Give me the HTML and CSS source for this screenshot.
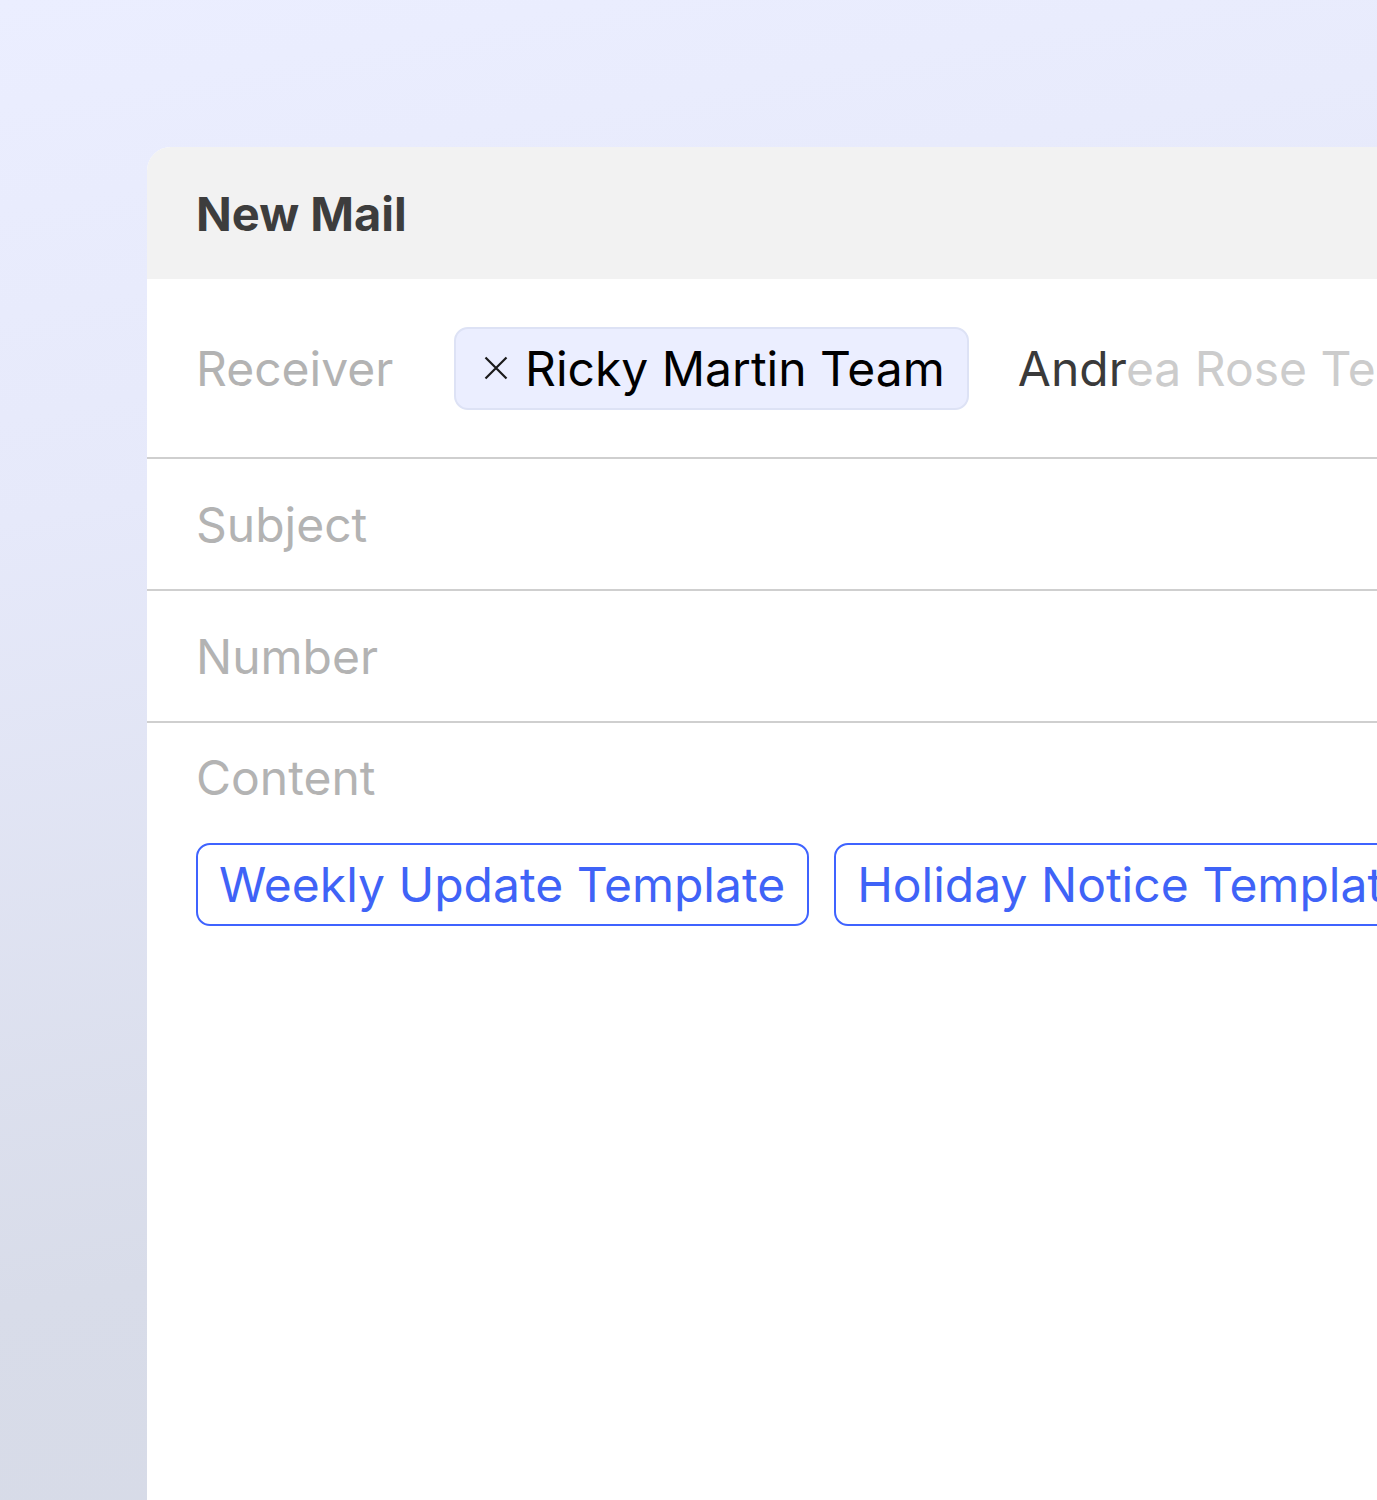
FILE: index.html
```html
<!DOCTYPE html>
<html>
<head>
<meta charset="utf-8">
<link rel="stylesheet" href="styles.css">
</head>
<body>
<div class="stage">
  <div class="card">
    <div class="card-head">
      <h1 class="title">New Mail</h1>
    </div>
    <div class="row row-receiver">
      <span class="label label-receiver">Receiver</span>
      <span class="chip">
        <svg class="chip-x" width="24" height="24" viewBox="0 0 24 24"><path d="M1.5 1.5 L22.5 22.5 M22.5 1.5 L1.5 22.5" stroke="#1a1a1a" stroke-width="2.2" fill="none"/></svg>
        <span class="chip-text">Ricky Martin Team</span>
      </span>
      <span class="typing"><span class="typed">Andr</span><span class="suggest">ea Rose Team</span></span>
    </div>
    <div class="row row-field">
      <span class="label">Subject</span>
    </div>
    <div class="row row-field">
      <span class="label">Number</span>
    </div>
    <div class="content">
      <span class="label">Content</span>
      <div class="templates">
        <button class="tpl">Weekly Update Template</button>
        <button class="tpl">Holiday Notice Template</button>
      </div>
    </div>
  </div>
</div>
</body>
</html>
```

FILE: styles.css
```css
html, body {
  margin: 0;
  padding: 0;
  height: 100%;
}
body {
  font-family: Inter, "Noto Sans", sans-serif;
  overflow: hidden;
  background: linear-gradient(170deg, #ebeeff 0%, #e6e9fa 30%, #d8dce9 75%, #d6dae6 100%);
}
.stage {
  padding: 147px 0 0 147px;
  height: 100%;
  box-sizing: border-box;
}
.card {
  width: 1600px;
  height: 1400px;
  background: #ffffff;
  border-top-left-radius: 24px;
  overflow: hidden;
}
.card-head {
  background: #f2f2f2;
  height: 132px;
  display: flex;
  align-items: center;
  padding-left: 49px;
}
.title {
  margin: 0;
  font-size: 47px;
  font-weight: 700;
  color: #3d3d3d;
}
.row {
  display: flex;
  align-items: center;
  padding-left: 49px;
  border-bottom: 2px solid #cfcfcf;
  box-sizing: border-box;
}
.row-receiver {
  height: 180px;
}
.row-field {
  height: 132px;
}
.label {
  font-size: 48px;
  color: #b3b3b3;
}
.label-receiver {
  width: 258px;
  flex: none;
}
.chip {
  display: inline-flex;
  align-items: center;
  gap: 17px;
  height: 83px;
  flex: none;
  box-sizing: border-box;
  padding: 0 22px 0 28px;
  background: #ebeeff;
  border: 2px solid #dde2f5;
  border-radius: 14px;
}
.chip-x {
  width: 24px;
  height: 24px;
}
.chip-text {
  font-size: 48px;
  color: #000;
  white-space: nowrap;
}
.typing {
  margin-left: 49px;
  font-size: 48px;
  white-space: nowrap;
}
.typed { color: #3a3a3a; }
.suggest { color: #cccccc; }
.content {
  padding: 26px 0 0 49px;
}
.content .label {
  display: block;
  line-height: 58px;
}
.templates {
  display: flex;
  gap: 25px;
  margin-top: 36px;
}
.tpl {
  font-family: Inter, "Noto Sans", sans-serif;
  font-size: 48px;
  color: #3f63f7;
  background: #fff;
  border: 2px solid #3f63ff;
  border-radius: 14px;
  height: 83px;
  padding: 0 22px 0 21px;
  white-space: nowrap;
  flex: none;
}
```
